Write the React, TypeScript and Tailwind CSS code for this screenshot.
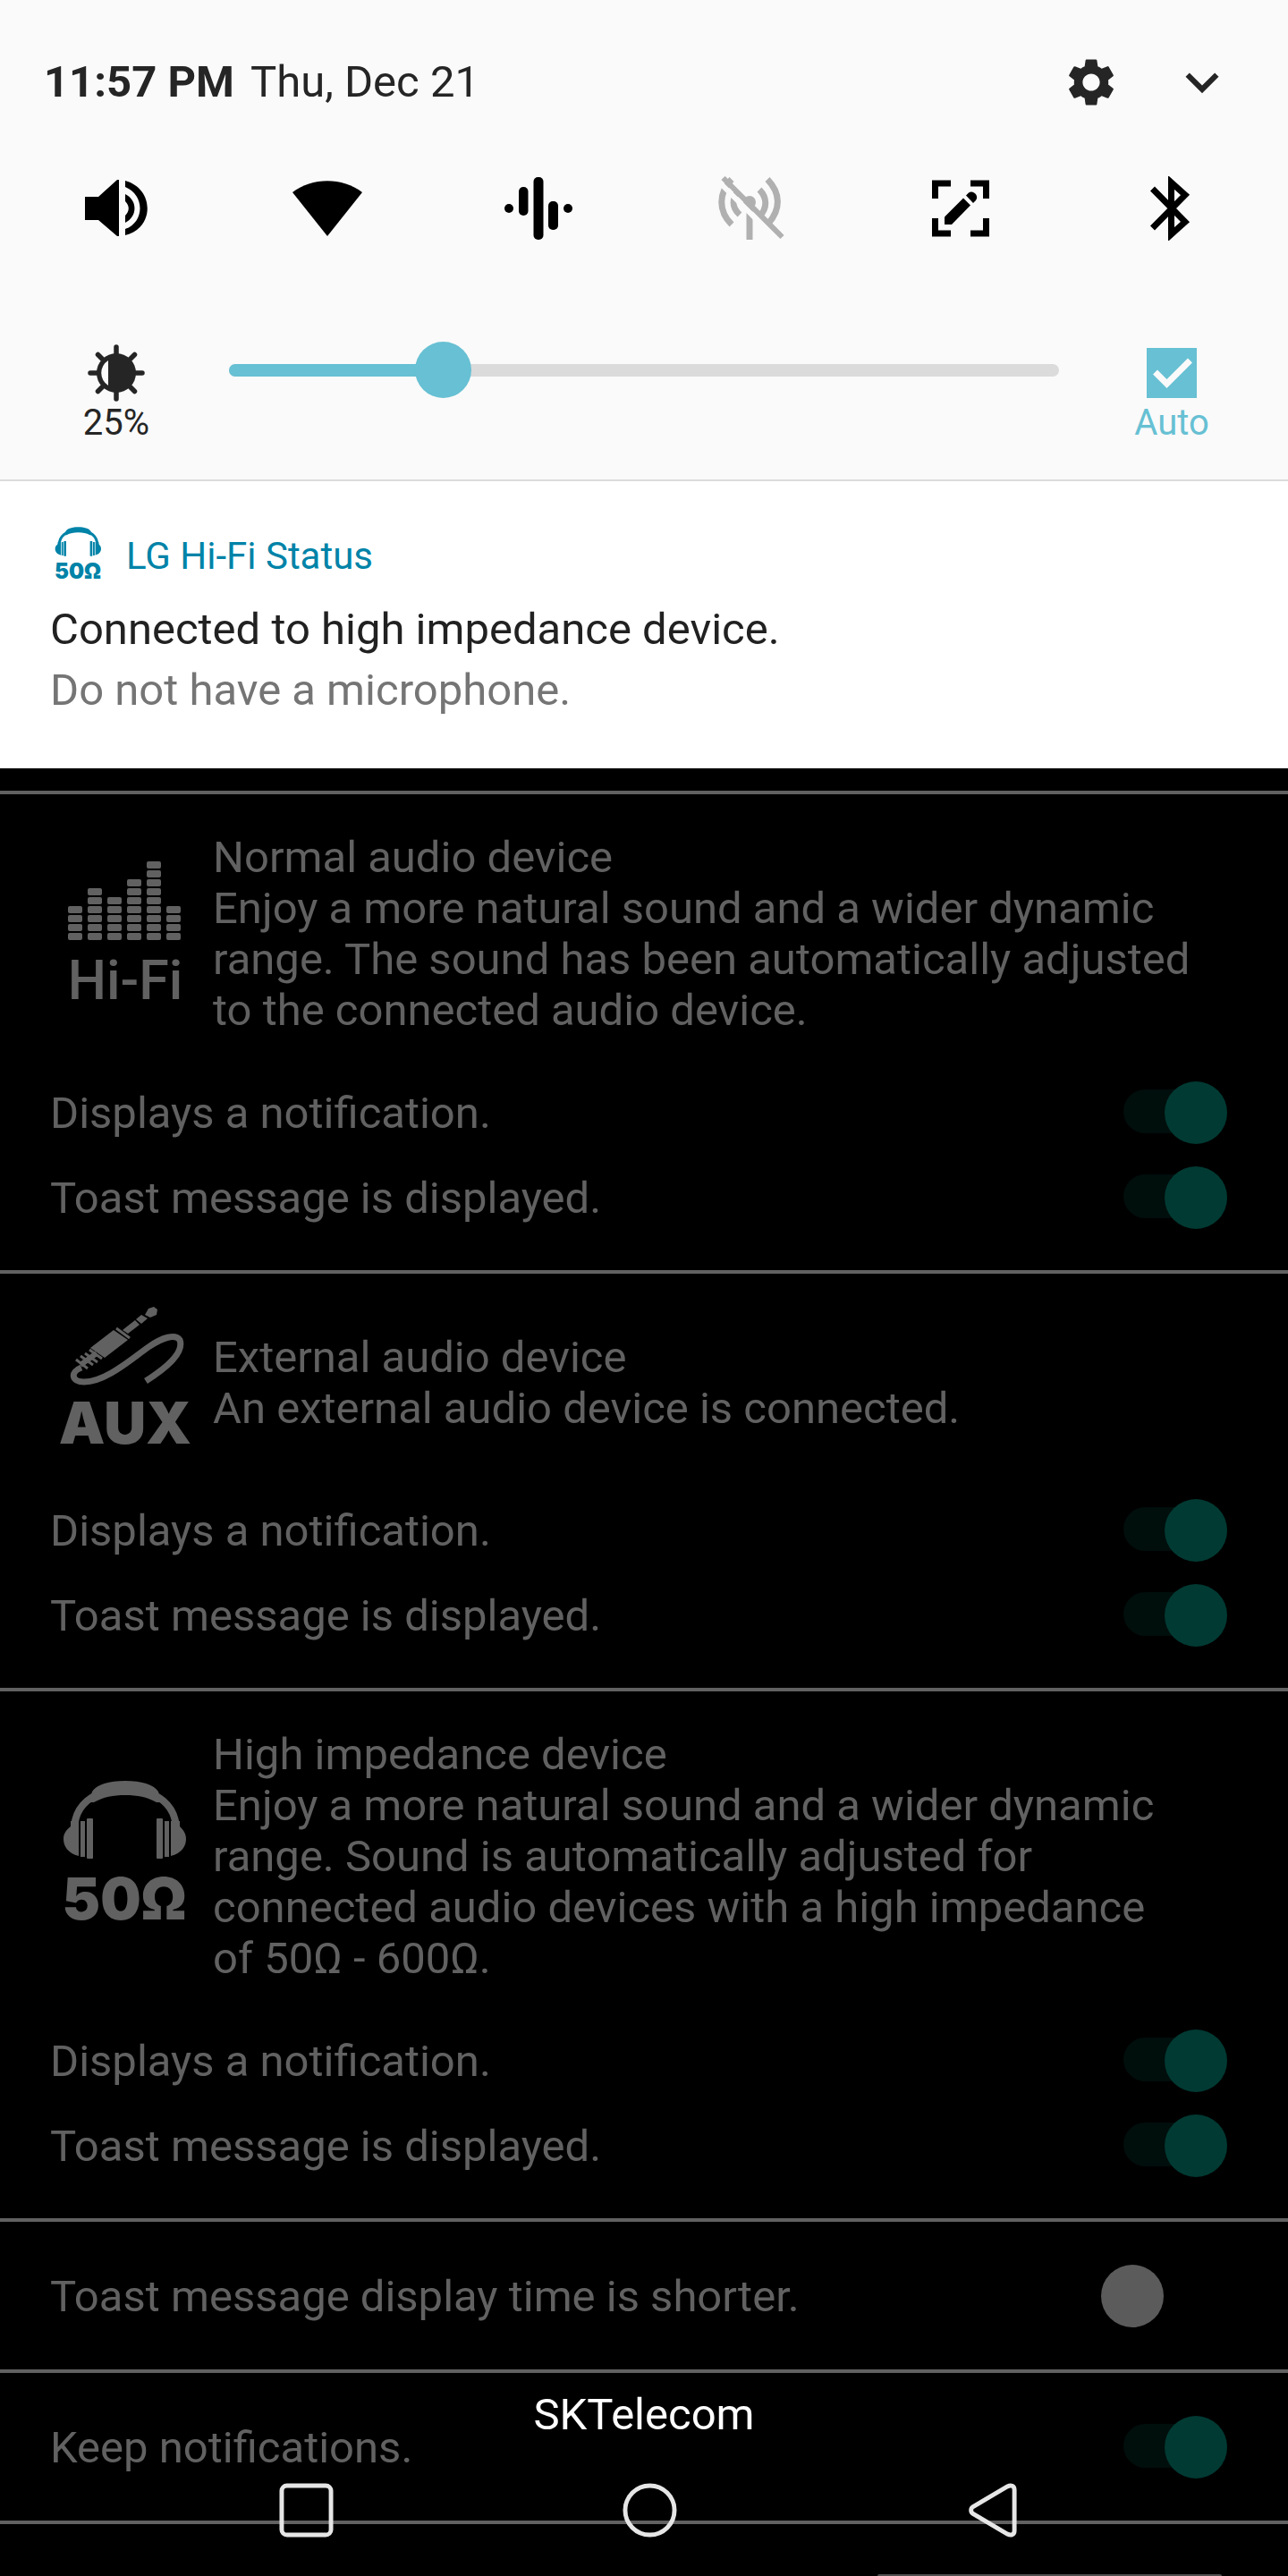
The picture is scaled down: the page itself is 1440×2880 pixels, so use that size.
import { useState } from "react";
import type { ReactNode } from "react";
import { MdExpandMore, MdSettings } from "react-icons/md";

interface DeviceSectionProps {
  id: string;
  icon: ReactNode;
  title: string;
  description: string;
}

const EQ_COLUMNS = [4, 6, 5, 7, 9, 4];

function VolumeIcon() {
  return (
    <svg viewBox="0 0 80 72" className="h-[72px] w-20" fill="currentColor" aria-hidden="true">
      <path d="M5 23h15L41 4h2v63h-2L20 49H5z" />
      <path d="M50 20C64 27 64 45 50 52V44C55 39 55 33 50 28Z" />
      <path d="M50 5C83 14 83 58 50 66V59C72 51 72 21 50 12Z" />
    </svg>
  );
}

function WifiIcon() {
  return (
    <svg viewBox="0 0 80 72" className="h-[72px] w-20" fill="currentColor" aria-hidden="true">
      <path d="M1 18C23 1 57 1 79 18L40 67Z" />
    </svg>
  );
}

function SoundWaveIcon() {
  return (
    <svg viewBox="0 0 80 72" className="h-[72px] w-20" fill="currentColor" aria-hidden="true">
      <circle cx="7" cy="36" r="5" />
      <rect x="18" y="12" width="10.5" height="32" rx="5" />
      <rect x="34.5" y="1" width="11" height="70" rx="5" />
      <rect x="51" y="28" width="11" height="32" rx="5" />
      <circle cx="73" cy="36" r="5" />
    </svg>
  );
}

function HotspotOffIcon() {
  return (
    <svg viewBox="0 0 80 72" className="h-[72px] w-20 text-[#b0b0b0]" fill="none" stroke="currentColor" strokeWidth="7" aria-hidden="true">
      <path d="M60 3.500C75 19 75 37 61 53" />
      <path d="M51 15C60 24 60 36 51 45" />
      <path d="M20 3.500C5 19 5 39 20 54" />
      <path d="M28 16C20 25 20 35 29 43" />
      <circle cx="40" cy="29" r="7" fill="currentColor" stroke="none" />
      <path d="M40 36V71" />
      <path d="M5 5.500L73 73.500" stroke="#fafafa" strokeWidth="6" />
      <path d="M10.500 2L76.500 68" strokeWidth="6" />
    </svg>
  );
}

function CaptureIcon() {
  return (
    <svg viewBox="0 0 80 72" className="h-[72px] w-20" aria-hidden="true">
      <path
        d="M11.500 25V8H29M51 8H68.500V25M68.500 47V64H51M29 64H11.500V47"
        fill="none"
        stroke="currentColor"
        strokeWidth="7"
      />
      <path d="M22 45.500L43 24.500L51 32.500L30 54H22Z" fill="currentColor" />
      <path d="M46 21.500L49 18.500C54 15 61 22 57 27L54 30Z" fill="currentColor" />
    </svg>
  );
}

function BluetoothIcon() {
  return (
    <svg viewBox="0 0 80 72" className="h-[72px] w-20" fill="none" stroke="currentColor" strokeWidth="7" aria-hidden="true">
      <path d="M18.500 14L55 51L39.500 65V7L55 21L18.500 58" />
    </svg>
  );
}

function BrightnessIcon() {
  return (
    <svg viewBox="0 0 64 64" className="size-16 text-[#252525]" aria-hidden="true">
      <path
        d="M32 3V61M3 32H61M11.500 11.500L52.500 52.500M52.500 11.500L11.500 52.500"
        stroke="currentColor"
        strokeWidth="5.500"
        strokeLinecap="round"
      />
      <circle cx="32" cy="32" r="22" fill="currentColor" />
      <path d="M23 18A16.500 16.500 0 0 0 23 46Z" fill="#fafafa" />
    </svg>
  );
}

function Headphones() {
  return (
    <g fill="currentColor">
      <path d="M27 56C28 32 45 13 84 13C123 13 140 32 141 56" fill="none" stroke="currentColor" strokeWidth="8" />
      <path d="M47 15C52 7 66 3 84 3C102 3 116 7 121 15L124 27H119C108 21 98 19 84 19C70 19 60 21 49 27H44Z" />
      <path d="M23 48H32V87C20 84 15 76 15 68C15 62 18 58 23 54Z" />
      <rect x="34" y="48" width="5" height="40" />
      <rect x="41" y="45" width="7" height="45" rx="1" />
      <rect x="119" y="45" width="7" height="45" rx="1" />
      <rect x="128" y="48" width="5" height="40" />
      <path d="M145 48H135V87C147 84 152 76 152 68C152 62 149 58 145 54Z" />
    </g>
  );
}

function ImpedanceIcon() {
  return (
    <svg viewBox="0 0 168 175" className="h-[175px] w-[168px] overflow-visible" aria-hidden="true">
      <Headphones />
      <text x="83" y="158" textAnchor="middle" fontSize="64" fontWeight="900" fontFamily="Inter, sans-serif" fill="currentColor">
        50Ω
      </text>
    </svg>
  );
}

function HiFiIcon() {
  return (
    <svg viewBox="0 0 168 175" className="h-[175px] w-[168px] overflow-visible" fill="currentColor" aria-hidden="true">
      {EQ_COLUMNS.map((count, col) =>
        Array.from({ length: count }, (_, row) => (
          <rect key={`${col}-${row}`} x={20 + col * 22} y={86 - row * 10} width="16" height="8" rx="2" />
        ))
      )}
      <text x="84" y="160" textAnchor="middle" fontSize="61" fontWeight="500" fontFamily="Roboto, sans-serif">
        Hi-Fi
      </text>
    </svg>
  );
}

function AuxIcon() {
  return (
    <svg viewBox="0 0 168 175" className="h-[175px] w-[168px] overflow-visible" fill="currentColor" aria-hidden="true">
      <path d="M106 12L110 5L116 3L120 6L119 12L112 15Z" />
      <path d="M96 17L102 12L109 16L102 22Z" />
      <path d="M81 29L87 33L100 23L95 18Z" />
      <path d="M71 29L87 40L61 60L45 49Z" />
      <g fill="none" stroke="currentColor">
        <path d="M74 27L89 38" strokeWidth="3" />
        <path d="M44 51L58 61M39 55L53 65M34 58L48 68M29 62L42 72" strokeWidth="3" />
        <path d="M34 68L52 55" strokeWidth="6" />
        <path d="M35 71C22 76 24 87 38 87C62 87 90 62 110 48C126 37 140 33 145 40C150 54 132 70 107 86" strokeWidth="7" />
      </g>
      <text x="84" y="156" textAnchor="middle" fontSize="65" fontWeight="900" fontFamily="Inter, sans-serif">
        AUX
      </text>
    </svg>
  );
}

function ToggleRow({ id, label, defaultChecked = true }: { id: string; label: string; defaultChecked?: boolean }) {
  return (
    <div className="flex h-[95px] items-center justify-between pl-14 pr-[68px]">
      <label htmlFor={id} className="pt-0.5">
        {label}
      </label>
      <input
        id={id}
        type="checkbox"
        role="switch"
        defaultChecked={defaultChecked}
        className="relative h-[70px] w-[141px] shrink-0 appearance-none before:absolute before:left-[25px] before:top-[9px] before:h-[49px] before:w-[91px] before:rounded-full checked:before:bg-[#000e0c] after:absolute after:left-0 after:top-0 after:size-[70px] after:rounded-full after:bg-[#5b5b5b] checked:after:left-[71px] checked:after:bg-[#003a33]"
      />
    </div>
  );
}

function DeviceSection({ id, icon, title, description }: DeviceSectionProps) {
  return (
    <section className="border-t-4 border-[#616161] pb-[34px] pt-[34px]">
      <div className="mb-[30px] flex items-center gap-3.5 pl-14 pr-[104px]">
        <div className="shrink-0">{icon}</div>
        <div className="py-2">
          <h2>{title}</h2>
          <p>{description}</p>
        </div>
      </div>
      <ToggleRow id={`${id}-notification`} label="Displays a notification." />
      <ToggleRow id={`${id}-toast`} label="Toast message is displayed." />
    </section>
  );
}

function QuickPanel() {
  const [level, setLevel] = useState(61);
  const percent = Math.ceil(((level + 1) / 255) * 100);

  const tiles = [
    { label: "Sound", icon: <VolumeIcon /> },
    { label: "Wi-Fi", icon: <WifiIcon /> },
    { label: "Hi-Fi Quad DAC", icon: <SoundWaveIcon /> },
    { label: "Hotspot", icon: <HotspotOffIcon /> },
    { label: "Capture+", icon: <CaptureIcon /> },
    { label: "Bluetooth", icon: <BluetoothIcon /> },
  ];

  return (
    <header className="border-b-2 border-[#dbdbdb] bg-[#fafafa] pb-10 pt-[63px] text-[#252525]">
      <div className="flex h-[57px] items-center pl-[49px] pr-[59px]">
        <span className="font-bold">11:57 PM</span>
        <span className="ml-[18px]">Thu, Dec 21</span>
        <div className="ml-auto flex items-center gap-[55px]">
          <button aria-label="Settings">
            <MdSettings size={64} />
          </button>
          <button aria-label="Expand">
            <MdExpandMore size={74} />
          </button>
        </div>
      </div>

      <div className="mt-[77px] grid grid-cols-6 px-3 text-black">
        {tiles.map((tile) => (
          <button key={tile.label} aria-label={tile.label} className="flex justify-center">
            {tile.icon}
          </button>
        ))}
      </div>

      <div className="mt-[113px] flex items-start gap-2 px-3 text-[40px] leading-[47px]">
        <div className="flex w-[236px] flex-col items-center pt-[3px]">
          <BrightnessIcon />
          <span>{percent}%</span>
        </div>
        <div className="relative flex h-[63px] min-w-0 flex-1 items-center">
          <div className="h-3.5 w-full overflow-hidden rounded-full bg-[#dbdbdb]">
            <div className="h-full bg-[#67c0d3]" style={{ width: `${(level / 254) * 100}%` }} />
          </div>
          <input
            type="range"
            aria-label="Brightness"
            min={0}
            max={254}
            value={level}
            onChange={(e) => setLevel(Number(e.target.value))}
            className="absolute inset-0 h-full w-full appearance-none bg-transparent [&::-webkit-slider-thumb]:size-[63px] [&::-webkit-slider-thumb]:appearance-none [&::-webkit-slider-thumb]:rounded-full [&::-webkit-slider-thumb]:bg-[#67c0d3]"
          />
        </div>
        <label className="flex w-[236px] flex-col items-center pt-[3px] text-[#67c0d3]">
          <span className="relative flex size-16 items-center justify-center">
            <input type="checkbox" defaultChecked className="peer size-14 appearance-none border-4 border-[#67c0d3] checked:bg-[#67c0d3]" />
            <svg viewBox="0 0 56 56" className="pointer-events-none absolute left-1 top-1 hidden size-14 peer-checked:block" aria-hidden="true">
              <path d="M9.500 27L22.500 40L48.500 14" fill="none" stroke="#fafafa" strokeWidth="7" />
            </svg>
          </span>
          Auto
        </label>
      </div>
    </header>
  );
}

function Notification() {
  return (
    <article className="bg-white px-14 pb-[53px] pt-[51px]">
      <div className="flex items-start text-[42px] leading-[49px] text-[#0083a8]">
        <svg viewBox="0 0 64 66" className="h-[66px] w-16" fill="currentColor" aria-hidden="true">
          <g transform="translate(0 -1) scale(0.375)">
            <Headphones />
          </g>
          <text x="31" y="58" textAnchor="middle" fontSize="24" fontWeight="900" fontFamily="Inter, sans-serif">
            50Ω
          </text>
        </svg>
        <span className="ml-[21px] mt-2">LG Hi-Fi Status</span>
      </div>
      <div className="mt-[15px] leading-[68px]">
        <h1 className="text-[#212121]">Connected to high impedance device.</h1>
        <p className="text-[#757575]">Do not have a microphone.</p>
      </div>
    </article>
  );
}

function NavigationBar() {
  return (
    <footer className="absolute inset-x-0 bottom-0 pb-[43px]">
      <p className="text-center text-white">SKTelecom</p>
      <nav className="mt-12 grid grid-cols-3 pl-[150px] pr-[138px] text-[#e6e6e6]">
        <button aria-label="Recent apps" className="flex justify-center">
          <svg viewBox="0 0 62 62" className="size-[61px]" fill="none" stroke="currentColor" strokeWidth="5">
            <rect x="3" y="3" width="56" height="56" rx="6" />
          </svg>
        </button>
        <button aria-label="Home" className="flex justify-center">
          <svg viewBox="0 0 62 62" className="size-[61px]" fill="none" stroke="currentColor" strokeWidth="5">
            <circle cx="31" cy="31" r="28" />
          </svg>
        </button>
        <button aria-label="Back" className="flex justify-center">
          <svg viewBox="0 0 62 62" className="size-[61px]" fill="none" stroke="currentColor" strokeWidth="5">
            <path d="M8 27L47 4C51 2 55 3 55 8V54C55 59 51 60 47 58L8 35C5 33 5 29 8 27Z" />
          </svg>
        </button>
      </nav>
    </footer>
  );
}

export default function App() {
  return (
    <div className="relative min-h-screen overflow-hidden bg-black font-['Roboto',sans-serif] text-[49px] leading-[57px]">
      <QuickPanel />
      <Notification />

      <main className="pt-[25px] text-[#616161]">
        <DeviceSection
          id="normal"
          icon={<HiFiIcon />}
          title="Normal audio device"
          description="Enjoy a more natural sound and a wider dynamic range. The sound has been automatically adjusted to the connected audio device."
        />
        <DeviceSection
          id="external"
          icon={<AuxIcon />}
          title="External audio device"
          description="An external audio device is connected."
        />
        <DeviceSection
          id="impedance"
          icon={<ImpedanceIcon />}
          title="High impedance device"
          description="Enjoy a more natural sound and a wider dynamic range. Sound is automatically adjusted for connected audio devices with a high impedance of 50Ω - 600Ω."
        />
        <section className="border-t-4 border-[#616161] py-[35px]">
          <ToggleRow id="short-toast" label="Toast message display time is shorter." defaultChecked={false} />
        </section>
        <section className="border-y-4 border-[#616161] py-[35px]">
          <ToggleRow id="keep" label="Keep notifications." />
        </section>
        <div className="flex justify-end pr-[74px] pt-14">
          <div className="h-0.5 w-[385px] rounded-t-sm bg-[#505050]" />
        </div>
      </main>

      <NavigationBar />
    </div>
  );
}
